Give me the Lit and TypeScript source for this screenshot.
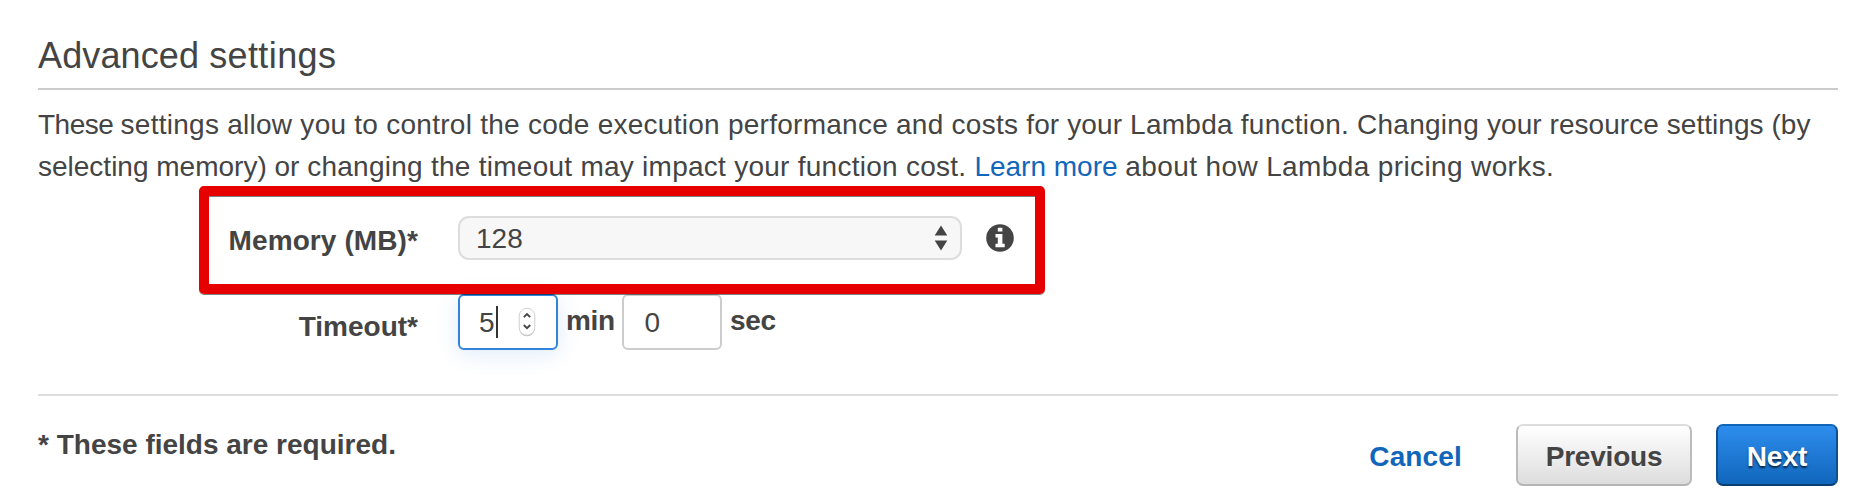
import { LitElement, html, css } from "lit";
import { customElement, property } from "lit/decorators.js";

@customElement("number-box")
class NumberBox extends LitElement {
  @property() value = "";
  @property({ type: Boolean, reflect: true }) active = false;

  static styles = css`
    :host { display: flex; align-items: center; box-sizing: border-box; width: 100px; height: 56px;
      border: 2px solid #ccc; border-radius: 6px; background: #fff; padding-left: 20.5px; }
    :host([active]) { border-color: #3184dc; padding-left: 19px; box-shadow: 0 4px 22px rgba(49, 132, 220, 0.16); }
    .value { line-height: 42px; padding-top: 1px; }
    .caret { width: 2px; height: 32px; background: #333; margin-left: 1px; }
    .spin { margin-left: 20px; width: 18px; height: 30px; }
  `;

  render() {
    return html`<span class="value">${this.value}</span>
      ${this.active
        ? html`<span class="caret"></span>
            <svg class="spin" viewBox="0 0 18 30" fill="none">
              <rect x="1.2" y="2" width="15.6" height="27.2" rx="7.8" fill="#bbb" />
              <rect x="1.2" y="1.2" width="15.6" height="27" rx="7.8" fill="#fff" stroke="#d2d2d2" />
              <path d="M5.8 10.2 9 7 12.2 10.2M5.8 18 9 21.2 12.2 18" stroke="#444" stroke-width="1.8" />
            </svg>`
        : ""}`;
  }
}

@customElement("app-root")
class AppRoot extends LitElement {
  static styles = css`
    :host { display: block; box-sizing: border-box; width: 1856px; height: 504px; padding: 31px 18px 0 38px;
      overflow: hidden; background: #fff; color: #444; white-space: nowrap;
      font: 28px/42px "Liberation Sans", Arial, sans-serif; }
    .title { margin: 0; height: 57px; font-size: 36px; line-height: 50px; font-weight: 400; border-bottom: 2px solid #ccc; }
    .intro { margin: 13.5px 0 0; height: 83.5px; }
    .line { display: block; }
    .tight { letter-spacing: -0.5px; }
    .snug { letter-spacing: 0.05px; }
    .mid { letter-spacing: 0.12px; }
    .wide { letter-spacing: 0.26px; }
    .wider { letter-spacing: 0.38px; }
    .link { color: #1166bb; text-decoration: none; }
    .row { display: flex; align-items: flex-start; }
    .label { width: 380px; margin-right: 40px; text-align: right; font-weight: 700; }
    .memory { position: relative; height: 107px; }
    .memory .label { padding-top: 32.5px; letter-spacing: 0.1px; }
    .mark { position: absolute; left: 161px; top: -1px; box-sizing: border-box; width: 846px; height: 108px;
      border: 10px solid #e60000; border-radius: 5px;
      box-shadow: 0 1px 0 rgba(0, 0, 0, 0.5), inset 0 1px 0 rgba(0, 0, 0, 0.5); z-index: 1; }
    .select { display: flex; align-items: center; justify-content: space-between; box-sizing: border-box;
      width: 504px; height: 44px; margin-top: 29px; padding: 0 12px 0 16px;
      border: 2px solid #ddd; border-radius: 11px; background: #f7f7f7; }
    .choice { padding-top: 1px; }
    .arrows { width: 14px; height: 26px; }
    .info { width: 28px; height: 28px; margin: 37px 0 0 24px; }
    .timeout .label { padding-top: 11.5px; }
    .unit { box-sizing: border-box; font-weight: 700; padding: 5.5px 0 0 8px; width: 64px; letter-spacing: -0.3px; }
    .footer { display: flex; margin-top: 44px; border-top: 2px solid #ddd; }
    .required { font-weight: 700; padding-top: 27.5px; }
    .actions { display: flex; align-items: center; margin: 28px 0 0 auto; height: 62px; font-weight: 700; }
    .cancel { margin-right: 54px; padding-top: 3px; letter-spacing: 0.15px; }
    .btn { display: flex; align-items: center; justify-content: center; box-sizing: border-box; height: 62px;
      padding-top: 3px; border: 2px solid; border-radius: 7px; }
    .prev { width: 176px; margin-right: 24px; background: linear-gradient(#fff, #ddd); letter-spacing: -0.2px;
      border-color: #ddd #bbb #b5b5b5; text-shadow: 0 2px 2px #eee; }
    .next { width: 122px; color: #fff; background: linear-gradient(#2e8ded, #1166bb);
      border-color: #1166bb #0e4f92 #093f75; text-shadow: 0 2px 2px rgba(0, 0, 0, 0.65); }
  `;

  render() {
    return html`
      <h2 class="title"><span class="mid">Advanced </span><span class="wider">settings</span></h2>
      <p class="intro">
        <span class="line"><span class="tight">These </span><span class="wide">settings allow you to control the code execution performance and costs </span><span class="mid">for your </span><span class="wide">Lambda function. Changing </span><span class="snug">your resource settings (by</span></span>
        <span class="line">selecting memory) or <span class="wide">changing the timeout may impact your function cost. </span><a class="link">Learn more</a> <span class="wider">about how Lambda pricing works.</span></span>
      </p>
      <div class="row memory">
        <div class="label">Memory (MB)*</div>
        <div class="select">
          <span class="choice">128</span>
          <svg class="arrows" viewBox="0 0 14 26" fill="#444"><path d="M7 .5 13.3 10.5H.7ZM7 25.5.7 15.5H13.3Z" /></svg>
        </div>
        <svg class="info" viewBox="0 0 28 28">
          <circle cx="14" cy="14" r="13.8" fill="#444" />
          <path d="M11.8 3.8h4.6v3.8h-4.6zM9.5 10h6.9v9.8h2.3v3.4H9.5v-3.4h2.3v-6.3H9.5z" fill="#fff" />
        </svg>
        <div class="mark"></div>
      </div>
      <div class="row timeout">
        <div class="label">Timeout*</div>
        <number-box value="5" active></number-box>
        <span class="unit">min</span>
        <number-box value="0"></number-box>
        <span class="unit">sec</span>
      </div>
      <div class="footer">
        <div class="required">* These fields are required.</div>
        <div class="actions">
          <a class="link cancel">Cancel</a>
          <div class="btn prev">Previous</div>
          <div class="btn next">Next</div>
        </div>
      </div>
    `;
  }
}
